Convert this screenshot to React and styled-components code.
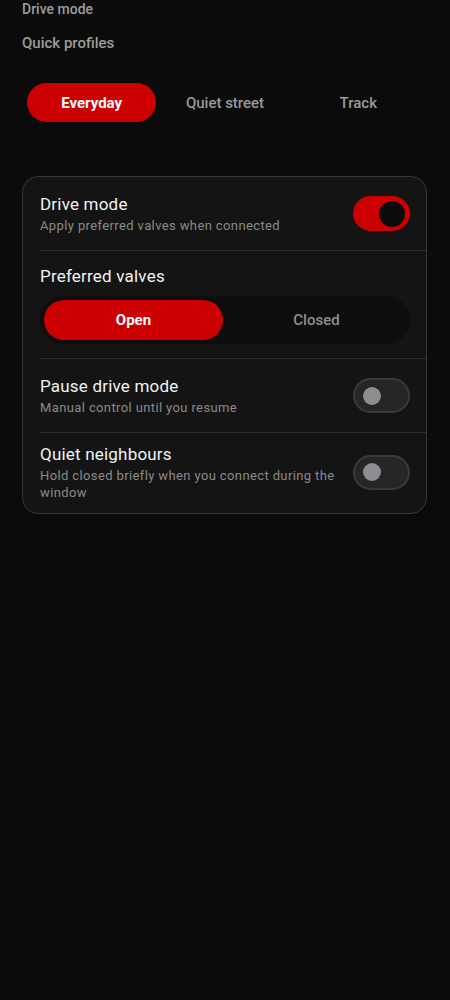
import React, { useState } from "react";
import styled, { createGlobalStyle } from "styled-components";

const GlobalStyle = createGlobalStyle`
  html, body {
    margin: 0;
    padding: 0;
    background: #0b0b0b;
  }
  body {
    font-family: Roboto, "Noto Sans", sans-serif;
    -webkit-font-smoothing: antialiased;
  }
`;

const Page = styled.div`
  min-height: 1000px;
  background: #0b0b0b;
  padding: 0 23px 40px 22px;
  box-sizing: border-box;
`;

const PageTitle = styled.div`
  font-size: 14px;
  line-height: 18px;
  font-weight: 500;
  color: #9c9c9c;
`;

const SectionTitle = styled.div`
  font-size: 15px;
  line-height: 20px;
  font-weight: 500;
  color: #9c9c9c;
  margin-top: 15px;
`;

const Tabs = styled.div`
  display: grid;
  grid-template-columns: repeat(3, 1fr);
  gap: 4px;
  padding: 0 4px 0 5px;
  margin-top: 30px;
`;

const Tab = styled.button`
  height: 39px;
  border: none;
  border-radius: 20px;
  font-family: inherit;
  font-size: 15px;
  font-weight: ${(p) => (p.$active ? 700 : 500)};
  color: ${(p) => (p.$active ? "#ffffff" : "#9a9a9a")};
  background: ${(p) => (p.$active ? "#cc0000" : "transparent")};
  cursor: pointer;
`;

const Card = styled.div`
  margin-top: 54px;
  background: #141414;
  border: 1px solid #353535;
  border-radius: 16px;
  overflow: hidden;
`;

const Row = styled.div`
  display: flex;
  align-items: center;
  gap: 12px;
  min-height: 74px;
  box-sizing: border-box;
  margin-left: 17px;
  padding: 10px 16px ${(p) => (p.$last ? "12px" : "10px")} 0;
  border-bottom: ${(p) => (p.$last ? "none" : "1px solid #2e2e2e")};
`;

const StackRow = styled.div`
  display: flex;
  flex-direction: column;
  gap: 9px;
  margin-left: 17px;
  padding: 14px 16px 14px 0;
  border-bottom: 1px solid #2e2e2e;
`;

const Texts = styled.div`
  flex: 1;
  min-width: 0;
`;

const Title = styled.div`
  font-size: 17px;
  line-height: 22px;
  letter-spacing: 0.2px;
  color: #f2f2f2;
`;

const Sub = styled.div`
  font-size: 13px;
  line-height: 17px;
  letter-spacing: 0.38px;
  color: #8a8a8a;
  margin-top: 2px;
`;

const Switch = styled.button`
  flex: none;
  width: 57px;
  height: 35px;
  border-radius: 18px;
  box-sizing: border-box;
  padding: 0;
  border: 2px solid ${(p) => (p.$on ? "#cc0000" : "#3a3a3a")};
  background: ${(p) => (p.$on ? "#cc0000" : "#262626")};
  display: flex;
  align-items: center;
  justify-content: ${(p) => (p.$on ? "flex-end" : "flex-start")};
  cursor: pointer;
`;

const Knob = styled.span`
  display: block;
  border-radius: 50%;
  width: ${(p) => (p.$on ? "26px" : "18px")};
  height: ${(p) => (p.$on ? "26px" : "18px")};
  margin: 0 ${(p) => (p.$on ? "3px" : "0")} 0 ${(p) => (p.$on ? "0" : "8px")};
  background: ${(p) => (p.$on ? "#0b0b0b" : "#8e8c90")};
`;

const Segment = styled.div`
  display: grid;
  grid-template-columns: 1fr 1fr;
  gap: 4px;
  padding: 4px;
  background: #0e0e0e;
  border-radius: 24px;
`;

const SegButton = styled.button`
  height: 40px;
  border: none;
  border-radius: 20px;
  font-family: inherit;
  font-size: 15px;
  font-weight: ${(p) => (p.$active ? 700 : 500)};
  color: ${(p) => (p.$active ? "#ffffff" : "#8e8e8e")};
  background: ${(p) => (p.$active ? "#cc0000" : "transparent")};
  cursor: pointer;
`;

const Toggle = ({ on, onClick }) => (
  <Switch $on={on} onClick={onClick}>
    <Knob $on={on} />
  </Switch>
);

const profiles = ["Everyday", "Quiet street", "Track"];

export default function App() {
  const [profile, setProfile] = useState("Everyday");
  const [driveMode, setDriveMode] = useState(true);
  const [valves, setValves] = useState("Open");
  const [paused, setPaused] = useState(false);
  const [quiet, setQuiet] = useState(false);

  return (
    <>
      <GlobalStyle />
      <Page>
        <PageTitle>Drive mode</PageTitle>
        <SectionTitle>Quick profiles</SectionTitle>
        <Tabs>
          {profiles.map((p) => (
            <Tab key={p} $active={profile === p} onClick={() => setProfile(p)}>
              {p}
            </Tab>
          ))}
        </Tabs>

        <Card>
          <Row>
            <Texts>
              <Title>Drive mode</Title>
              <Sub>Apply preferred valves when connected</Sub>
            </Texts>
            <Toggle on={driveMode} onClick={() => setDriveMode(!driveMode)} />
          </Row>
          <StackRow>
            <Title>Preferred valves</Title>
            <Segment>
              {["Open", "Closed"].map((v) => (
                <SegButton key={v} $active={valves === v} onClick={() => setValves(v)}>
                  {v}
                </SegButton>
              ))}
            </Segment>
          </StackRow>
          <Row>
            <Texts>
              <Title>Pause drive mode</Title>
              <Sub>Manual control until you resume</Sub>
            </Texts>
            <Toggle on={paused} onClick={() => setPaused(!paused)} />
          </Row>
          <Row $last>
            <Texts>
              <Title>Quiet neighbours</Title>
              <Sub>Hold closed briefly when you connect during the window</Sub>
            </Texts>
            <Toggle on={quiet} onClick={() => setQuiet(!quiet)} />
          </Row>
        </Card>
      </Page>
    </>
  );
}
